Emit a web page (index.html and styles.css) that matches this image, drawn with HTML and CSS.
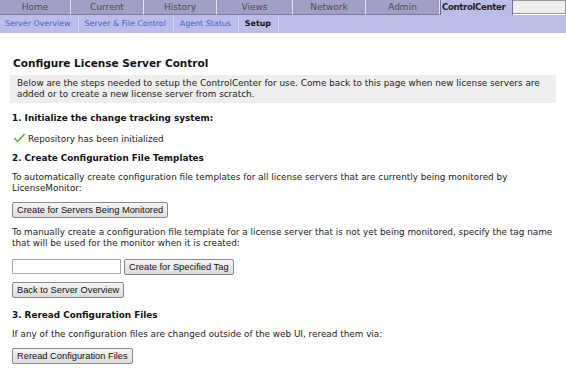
FILE: index.html
```html
<!DOCTYPE html>
<html>
<head>
<meta charset="utf-8">
<link rel="stylesheet" href="styles.css">
</head>
<body>
<div class="tabs">
  <div class="tab">Home</div>
  <div class="tab">Current</div>
  <div class="tab">History</div>
  <div class="tab">Views</div>
  <div class="tab">Network</div>
  <div class="tab">Admin</div>
  <div class="tab active">ControlCenter</div>
  <div class="tab-filler"></div>
</div>
<div class="subnav">
  <a class="sub first">Server Overview</a>
  <a class="sub">Server &amp; File Control</a>
  <a class="sub">Agent Status</a>
  <span class="sub current">Setup</span>
</div>
<div class="content">
  <h1 class="title">Configure License Server Control</h1>
  <div class="intro">Below are the steps needed to setup the ControlCenter for use. Come back to this page when new license servers are added or to create a new license server from scratch.</div>
  <h2 class="step s1">1. Initialize the change tracking system:</h2>
  <div class="status">
    <svg class="check" width="13" height="11" viewBox="0 0 13 11"><path d="M0.8 6 L4.4 9.8 L12.4 1.6 L11 0.6 L4.4 7.2 L2.2 4.6 Z" fill="#66bb55"/></svg>
    <span>Repository has been initialized</span>
  </div>
  <h2 class="step s2">2. Create Configuration File Templates</h2>
  <p class="para">To automatically create configuration file templates for all license servers that are currently being monitored by LicenseMonitor:</p>
  <div class="row r1"><button class="btn">Create for Servers Being Monitored</button></div>
  <p class="para p2">To manually create a configuration file template for a license server that is not yet being monitored, specify the tag name that will be used for the monitor when it is created:</p>
  <div class="row r2"><input class="field" type="text"><button class="btn">Create for Specified Tag</button></div>
  <div class="row r3"><button class="btn">Back to Server Overview</button></div>
  <h2 class="step s3">3. Reread Configuration Files</h2>
  <p class="para">If any of the configuration files are changed outside of the web UI, reread them via:</p>
  <div class="row r4"><button class="btn">Reread Configuration Files</button></div>
</div>
</body>
</html>
```
FILE: styles.css
```css
html, body {
  margin: 0;
  padding: 0;
  background: #ffffff;
}
body {
  font-family: "DejaVu Sans", Verdana, sans-serif;
  font-size: 8.85px;
  color: #222;
}
.tabs {
  display: grid;
  grid-template-columns: 71px 73px 73px 76px 73px 74px 73px 1fr;
  height: 15px;
}
.tab {
  background: #a09fc7;
  color: #4f4f4f;
  font-size: 9px;
  text-align: center;
  line-height: 14px;
  border-right: 1px solid #e4e4ee;
  border-bottom: 1px solid #7d7ca3;
  box-sizing: border-box;
}
.tab.active {
  background: #bcbce8;
  color: #222;
  font-weight: bold;
  font-size: 8.6px;
  letter-spacing: -0.35px;
  text-align: left;
  padding-left: 1px;
  border-left: 1px solid #6e6d96;
  border-right: 1px solid #6e6d96;
  border-bottom: none;
  white-space: nowrap;
  overflow: hidden;
}
.tab-filler {
  background: #efefef;
  border: 1px solid #9a9a9a;
  border-left: none;
  height: 14px;
  box-sizing: border-box;
}
.subnav {
  display: flex;
  background: #bcbce8;
  height: 18px;
}
.sub {
  color: #3a67c9;
  font-size: 7.9px;
  line-height: 18px;
  padding: 0 7px 0 6px;
  border-right: 1px solid #d4d4ef;
}
.sub.first {
  padding-left: 5px;
}
.sub.current {
  color: #111;
  font-weight: bold;
}
.content {
  padding: 0 10px;
}
.title {
  font-size: 10.5px;
  line-height: 13px;
  font-weight: bold;
  margin: 24px 0 5px 3px;
  color: #111;
}
.intro {
  background: #eeeeee;
  padding: 3px 7px;
  line-height: 11px;
}
.step {
  font-size: 8.85px;
  line-height: 11px;
  font-weight: bold;
  margin: 10px 0 0 2px;
  color: #111;
}
.step.s2 {
  margin-top: 8px;
}
.step.s3 {
  margin-top: 12px;
}
.status {
  display: flex;
  align-items: center;
  gap: 2px;
  margin: 10px 0 0 3px;
  line-height: 11px;
}
.check {
  margin-top: -3px;
}
.para {
  margin: 8px 0 0 2px;
  line-height: 11px;
}
.para.p2 {
  margin-top: 9px;
}
.row {
  display: flex;
  gap: 3px;
  margin: 8px 0 0 2px;
}
.row.r2 {
  margin-top: 10px;
}
.row.r3 {
  margin-top: 7px;
}
.btn {
  font-family: "Liberation Sans", Arial, sans-serif;
  font-size: 9.3px;
  color: #111;
  background: linear-gradient(#f5f5f5, #dcdcdc);
  border: 1px solid #8a8a8a;
  border-radius: 2px;
  padding: 1px 4px;
  height: 16px;
}
.field {
  width: 109px;
  height: 15px;
  box-sizing: border-box;
  border: 1px solid #a9a9a9;
  padding: 0;
}
```
